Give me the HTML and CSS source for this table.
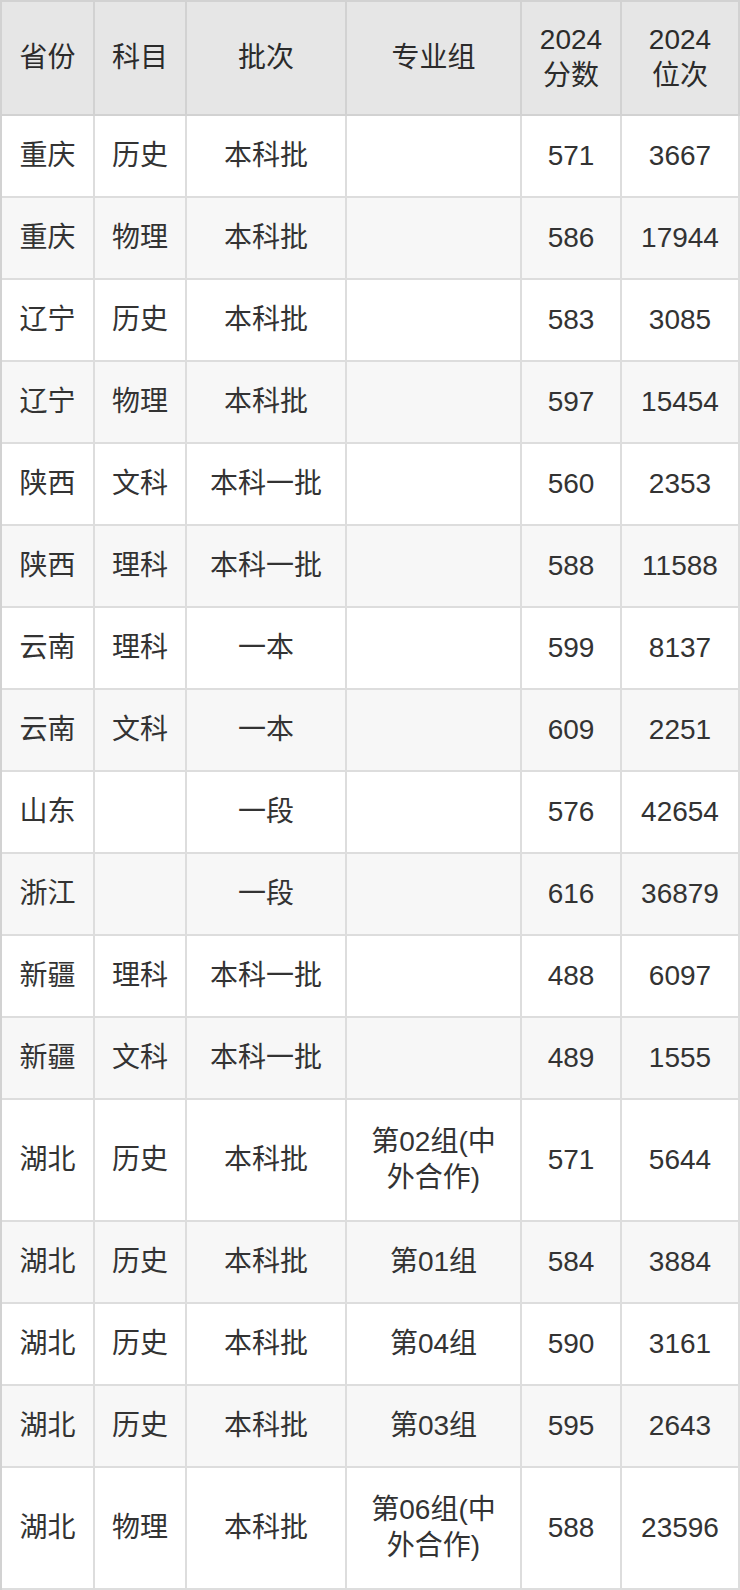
FILE: index.html
```html
<!DOCTYPE html>
<html lang="zh-CN">
<head>
<meta charset="utf-8">
<title>2024 分数位次</title>
<link rel="stylesheet" href="styles.css">
</head>
<body>
<table class="score-table">
  <thead>
    <tr>
      <th class="c1">省份</th>
      <th class="c2">科目</th>
      <th class="c3">批次</th>
      <th class="c4">专业组</th>
      <th class="c5">2024分数</th>
      <th class="c6">2024位次</th>
    </tr>
  </thead>
  <tbody>
    <tr><td>重庆</td><td>历史</td><td>本科批</td><td></td><td>571</td><td>3667</td></tr>
    <tr><td>重庆</td><td>物理</td><td>本科批</td><td></td><td>586</td><td>17944</td></tr>
    <tr><td>辽宁</td><td>历史</td><td>本科批</td><td></td><td>583</td><td>3085</td></tr>
    <tr><td>辽宁</td><td>物理</td><td>本科批</td><td></td><td>597</td><td>15454</td></tr>
    <tr><td>陕西</td><td>文科</td><td>本科一批</td><td></td><td>560</td><td>2353</td></tr>
    <tr><td>陕西</td><td>理科</td><td>本科一批</td><td></td><td>588</td><td>11588</td></tr>
    <tr><td>云南</td><td>理科</td><td>一本</td><td></td><td>599</td><td>8137</td></tr>
    <tr><td>云南</td><td>文科</td><td>一本</td><td></td><td>609</td><td>2251</td></tr>
    <tr><td>山东</td><td></td><td>一段</td><td></td><td>576</td><td>42654</td></tr>
    <tr><td>浙江</td><td></td><td>一段</td><td></td><td>616</td><td>36879</td></tr>
    <tr><td>新疆</td><td>理科</td><td>本科一批</td><td></td><td>488</td><td>6097</td></tr>
    <tr><td>新疆</td><td>文科</td><td>本科一批</td><td></td><td>489</td><td>1555</td></tr>
    <tr class="tall"><td>湖北</td><td>历史</td><td>本科批</td><td>第02组(中外合作)</td><td>571</td><td>5644</td></tr>
    <tr><td>湖北</td><td>历史</td><td>本科批</td><td>第01组</td><td>584</td><td>3884</td></tr>
    <tr><td>湖北</td><td>历史</td><td>本科批</td><td>第04组</td><td>590</td><td>3161</td></tr>
    <tr><td>湖北</td><td>历史</td><td>本科批</td><td>第03组</td><td>595</td><td>2643</td></tr>
    <tr class="tall"><td>湖北</td><td>物理</td><td>本科批</td><td>第06组(中外合作)</td><td>588</td><td>23596</td></tr>
  </tbody>
</table>
</body>
</html>
```

FILE: styles.css
```css
html, body {
  margin: 0;
  padding: 0;
  background: #ffffff;
}

.score-table {
  width: 740px;
  table-layout: fixed;
  border-collapse: separate;
  border-spacing: 0;
  border-left: 2px solid #d2d2d2;
  border-top: 2px solid #d2d2d2;
  font-family: "Liberation Sans", "Noto Sans CJK SC", sans-serif;
  font-size: 28px;
  line-height: 36px;
  color: #333333;
}

.score-table th,
.score-table td {
  box-sizing: border-box;
  padding: 0 16px;
  text-align: center;
  vertical-align: middle;
  font-weight: normal;
  border-right: 2px solid #dddddd;
  border-bottom: 2px solid #dddddd;
}

.score-table th {
  height: 114px;
  background: #e6e6e6;
  border-color: #d2d2d2;
  color: #2b2b2b;
}

.c1 { width: 93px; }
.c2 { width: 92px; }
.c3 { width: 160px; }
.c4 { width: 175px; }
.c5 { width: 100px; }
.c6 { width: 118px; }

.score-table td {
  height: 82px;
  background: #ffffff;
}

.score-table tbody tr:nth-child(even) td {
  background: #f7f7f7;
}

.score-table tr.tall td {
  height: 122px;
}
```
